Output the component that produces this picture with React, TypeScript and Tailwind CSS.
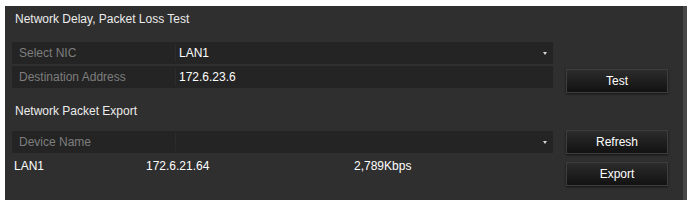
export default function App() {
  const font = { fontFamily: '"Liberation Sans", Arial, sans-serif' };
  const btn =
    "flex h-[24px] w-[102px] items-center justify-center border border-[#3e3e3e] bg-gradient-to-b from-[#2c2c2c] to-[#121212] text-[12px] text-white shadow-[0_1px_2px_rgba(0,0,0,0.6)]";
  const arrow = "h-0 w-0 border-l-[2px] border-r-[2px] border-t-[3px] border-l-transparent border-r-transparent border-t-[#d8d8d8]";

  return (
    <div className="h-[200px] w-[690px] overflow-hidden bg-white pl-[5px] pr-[3px] pt-[6px]" style={font}>
      <div className="h-[194px] border-r-[4px] border-[#484848] bg-[#2f2f2f] pl-[7px] pr-[15px] pt-[7px]">
        <div className="h-[29px] pl-[3px] text-[12px] leading-[12px] text-[#ececec]">Network Delay, Packet Loss Test</div>

        <div className="flex gap-[13px]">
          <div className="flex w-[542px] flex-col gap-[2px]">
            <div className="flex h-[22px] items-center bg-[#242424]">
              <div className="w-[164px] border-r border-[#2c2c2c] pl-[7px] text-[12px] text-[#7e7e7e]">Select NIC</div>
              <div className="flex flex-1 items-center justify-between pl-[3px] pr-[6px] text-[12px] text-white">
                <span>LAN1</span>
                <span className={arrow} />
              </div>
            </div>
            <div className="flex h-[22px] items-center bg-[#242424]">
              <div className="w-[164px] border-r border-[#2c2c2c] pl-[7px] text-[12px] text-[#7e7e7e]">Destination Address</div>
              <div className="flex-1 pl-[3px] text-[12px] text-white">172.6.23.6</div>
            </div>
          </div>
          <div className="flex flex-col justify-end">
            <div className={btn + " mb-[-5px]"}>Test</div>
          </div>
        </div>

        <div className="mt-[17px] h-[26px] pl-[3px] text-[12px] leading-[12px] text-[#ececec]">Network Packet Export</div>

        <div className="flex gap-[13px]">
          <div className="flex w-[542px] flex-col">
            <div className="flex h-[22px] items-center bg-[#242424]">
              <div className="w-[164px] border-r border-[#2c2c2c] pl-[7px] text-[12px] text-[#7e7e7e]">Device Name</div>
              <div className="flex flex-1 items-center justify-end pr-[6px]">
                <span className={arrow} />
              </div>
            </div>
            <div className="flex h-[26px] items-center text-[12px] text-white">
              <div className="w-[134px] pl-[2px]">LAN1</div>
              <div className="w-[208px]">172.6.21.64</div>
              <div>2,789Kbps</div>
            </div>
          </div>
          <div className="-mt-[1px] flex flex-col gap-[8px]">
            <div className={btn}>Refresh</div>
            <div className={btn}>Export</div>
          </div>
        </div>
      </div>
    </div>
  );
}
